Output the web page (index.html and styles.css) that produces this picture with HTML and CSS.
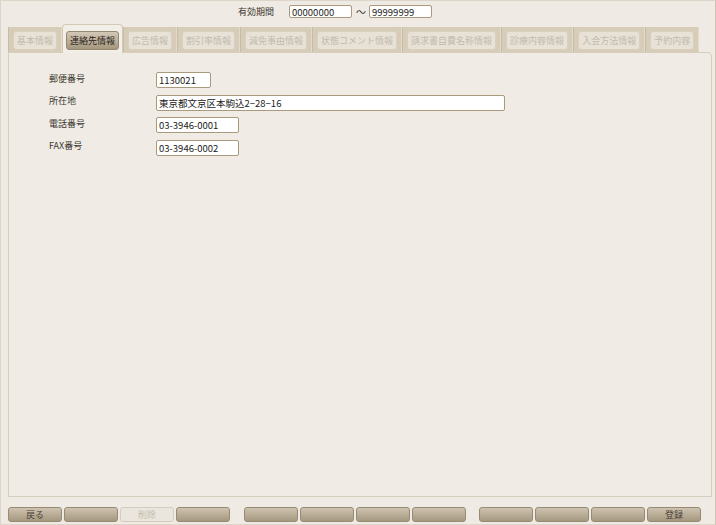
FILE: index.html
```html
<!DOCTYPE html>
<html lang="ja">
<head>
    <meta charset="UTF-8">
    <title>連絡先情報</title>
    <link rel="stylesheet" href="styles.css">
</head>
<body>
    <div class="window">
        <div class="period">
            <span class="period-label">有効期間</span>
            <input class="field period-from" type="text" value="00000000">
            <span class="tilde">〜</span>
            <input class="field period-to" type="text" value="99999999">
        </div>

        <div class="tabs">
            <div class="tab"><span class="tab-btn">基本情報</span></div>
            <div class="tab active"><span class="tab-btn">連絡先情報</span></div>
            <div class="tab"><span class="tab-btn">広告情報</span></div>
            <div class="tab"><span class="tab-btn">割引率情報</span></div>
            <div class="tab"><span class="tab-btn">減免事由情報</span></div>
            <div class="tab"><span class="tab-btn">状態コメント情報</span></div>
            <div class="tab"><span class="tab-btn">請求書自費名称情報</span></div>
            <div class="tab"><span class="tab-btn">診療内容情報</span></div>
            <div class="tab"><span class="tab-btn">入会方法情報</span></div>
            <div class="tab"><span class="tab-btn">予約内容</span></div>
        </div>

        <div class="panel">
            <div class="form">
                <label for="zip">郵便番号</label>
                <input class="field w-zip" id="zip" type="text" value="1130021">
                <label for="addr">所在地</label>
                <input class="field w-addr" id="addr" type="text" value="東京都文京区本駒込2−28−16">
                <label for="tel">電話番号</label>
                <input class="field w-tel" id="tel" type="text" value="03-3946-0001">
                <label for="fax">FAX番号</label>
                <input class="field w-tel" id="fax" type="text" value="03-3946-0002">
            </div>
        </div>

        <div class="actions">
            <div class="group">
                <button class="btn">戻る</button>
                <button class="btn"></button>
                <button class="btn" disabled>削除</button>
                <button class="btn"></button>
            </div>
            <div class="group">
                <button class="btn"></button>
                <button class="btn"></button>
                <button class="btn"></button>
                <button class="btn"></button>
            </div>
            <div class="group">
                <button class="btn"></button>
                <button class="btn"></button>
                <button class="btn"></button>
                <button class="btn">登録</button>
            </div>
        </div>
    </div>
</body>
</html>
```

FILE: styles.css
```css
* {
    box-sizing: border-box;
}
body {
    margin: 0;
    font-family: "Noto Sans CJK JP", "DejaVu Sans", sans-serif;
    font-size: 9px;
    color: #3a352e;
    background-color: #efebe4;
}
.window {
    width: 716px;
    height: 525px;
    display: flex;
    flex-direction: column;
    background-color: #efebe4;
    border: 1px solid #dcd5c8;
    border-right-color: #cfc6b6;
}
.period {
    height: 26px;
    display: flex;
    align-items: flex-start;
    padding: 4px 0 0 237px;
}
.period-label {
    line-height: 13px;
    margin-right: 15px;
}
.tilde {
    line-height: 13px;
    margin: 0 3px 0 4px;
    font-size: 10px;
}
.field {
    font-family: "Noto Sans CJK JP", "DejaVu Sans", sans-serif;
    font-size: 9.5px;
    color: #222;
    height: 16px;
    padding: 0 2px;
    margin: 0;
    background: #fff;
    border: 1px solid #a99a7e;
    border-radius: 2px;
    outline: none;
}
.period-from,
.period-to {
    width: 63px;
    height: 13px;
    line-height: 11px;
}
.tabs {
    display: flex;
    align-self: flex-start;
    margin-left: 7px;
    height: 25px;
    background-color: #d6ccb8;
    position: relative;
    z-index: 1;
}
.tab {
    flex: none;
    white-space: nowrap;
    padding: 4px 4px 2px;
    border-right: 1px solid #e2dacb;
    border-left: 1px solid #c8bca6;
}
.tab-btn {
    display: block;
    height: 19px;
    line-height: 17px;
    padding: 0 3px;
    color: #c2baac;
    background-color: #e7e1d6;
    border: 1px solid #d9d0c0;
    border-radius: 3px;
}
.tab.active {
    margin-top: -3px;
    padding: 6px 3px 3px;
    height: 29px;
    background-color: #f2eee8;
    border: 1px solid #d3c9b7;
    border-bottom: none;
    border-radius: 4px 4px 0 0;
}
.tab.active .tab-btn {
    color: #2b2620;
    background: linear-gradient(#d3c8b6, #a5977f);
    border-color: #958770;
}
.panel {
    height: 445px;
    margin: 0 3px 0 7px;
    background-color: #f0ece5;
    border: 1px solid #d6cdbc;
    border-radius: 0 4px 0 0;
}
.form {
    display: grid;
    grid-template-columns: 107px auto;
    justify-content: start;
    align-items: center;
    row-gap: 6.5px;
    padding: 19px 0 0 40px;
}
.form label {
    line-height: 12px;
    margin-top: -3px;
}
.form .field {
    justify-self: start;
}
.w-zip {
    width: 55px;
}
.w-addr {
    width: 349px;
}
.w-tel {
    width: 83px;
}
.actions {
    display: flex;
    padding: 10px 0 0 7px;
}
.group {
    display: flex;
    gap: 2px;
    margin-right: 14px;
}
.group:last-child {
    margin-left: -1px;
}
.btn {
    width: 54px;
    height: 15px;
    padding: 0;
    font-family: "Noto Sans CJK JP", "DejaVu Sans", sans-serif;
    font-size: 9px;
    line-height: 13px;
    color: #4a4238;
    background: linear-gradient(#cec3b1, #a6987f);
    border: 1px solid #978a73;
    border-radius: 3px;
}
.btn:disabled {
    color: #c4bcae;
    background: #ebe6dd;
    border-color: #d5ccbd;
}
```
